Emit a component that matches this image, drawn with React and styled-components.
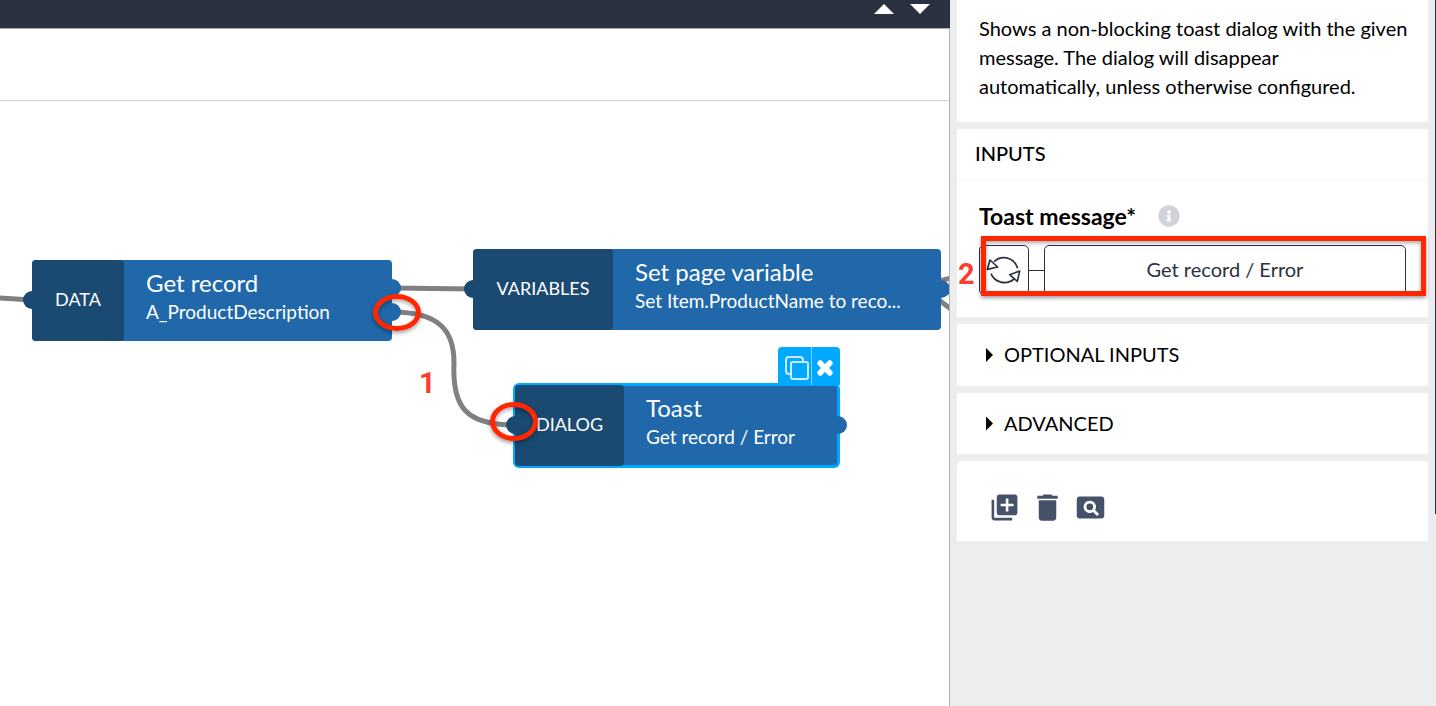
import React from "react";
import styled, { createGlobalStyle, css } from "styled-components";
import { MdDelete, MdLibraryAdd, MdPageview } from "react-icons/md";
import { FaInfoCircle, FaTimes } from "react-icons/fa";

const color = {
  ink: "#2a3140",
  node: "#2068aa",
  nodeDark: "#1a4971",
  selected: "#00a9ff",
  wire: "#808080",
  panel: "#ecedef",
  tool: "#465269",
  mark: "#ff2600",
  markText: "#ff3b30",
};

const GlobalStyle = createGlobalStyle`
  *, *::before, *::after { box-sizing: border-box; }
  body {
    margin: 0;
    background: #fff;
    color: #000;
    font-family: Lato, "Open Sans", sans-serif;
    font-size: 20px;
  }
  button { font: inherit; color: inherit; padding: 0; border: 0; background: none; cursor: pointer; }
  h2, p { margin: 0; }
  svg { display: block; }
`;

const Page = styled.div`
  display: flex;
  height: 100vh;
  min-height: 560px;
  overflow: hidden;
`;

const Editor = styled.main`
  flex: 1;
  min-width: 0;
  display: flex;
  flex-direction: column;
  border-right: 1px solid #b0b1b3;
`;

const TopBar = styled.header`
  display: flex;
  justify-content: flex-end;
  gap: 16px;
  height: 29px;
  padding: 4px 20px 0 0;
  margin-right: -1px;
  background: ${color.ink};
  border-bottom: 1px solid #a9acb1;
`;

const ArrowButton = styled.button`
  width: 20px;
  height: 10px;
  background: #fff;
  clip-path: ${(p) =>
    p.$up ? "polygon(50% 0, 100% 100%, 0 100%)" : "polygon(0 0, 100% 0, 50% 100%)"};
`;

const SubBar = styled.div`
  height: 72px;
  border-bottom: 1px solid #d0d2d6;
`;

const Canvas = styled.section`
  position: relative;
  flex: 1;
  overflow: hidden;
`;

const Wires = styled.svg`
  position: absolute;
  inset: 0;
  width: 100%;
  height: 100%;
  pointer-events: none;
`;

const NodeBox = styled.article`
  position: absolute;
  left: ${(p) => p.$x}px;
  top: ${(p) => p.$y}px;
  width: ${(p) => p.$w}px;
  height: 81px;
  display: flex;
  background: ${color.node};
  border-radius: 4px;
  color: #fff;
  ${(p) =>
    p.$selected &&
    css`
      box-shadow: inset 0 0 0 1px ${color.selected}, 0 0 0 2px ${color.selected};
    `}
`;

const NodeKind = styled.div`
  position: relative;
  display: flex;
  align-items: center;
  justify-content: center;
  flex: 0 0 ${(p) => p.$w}px;
  padding-bottom: 3px;
  background: ${color.nodeDark};
  border-radius: 4px;
  font-size: 18px;
`;

const NodeBody = styled.div`
  position: relative;
  flex: 1;
  min-width: 0;
  padding: 8px 22px;
`;

const NodeTitle = styled.div`
  font-size: 24px;
  line-height: 29px;
  white-space: nowrap;
`;

const NodeText = styled.div`
  font-size: 19px;
  line-height: 29px;
  white-space: nowrap;
`;

const Port = styled.span`
  position: absolute;
  top: ${(p) => p.$y}px;
  ${(p) => (p.$out ? "right: -9px;" : "left: -9px;")}
  width: 18px;
  height: 18px;
  border-radius: 50%;
  background: ${(p) => (p.$out ? color.node : color.nodeDark)};
`;

const NodeTools = styled.div`
  position: absolute;
  right: -2px;
  bottom: 100%;
  display: flex;
  height: 38px;
  background: ${color.selected};
  border-radius: 4px 4px 0 0;
`;

const NodeTool = styled.button`
  display: flex;
  align-items: center;
  justify-content: center;
  width: 33px;
  padding: 4px 0 0 4px;
  color: #fff;
  & + & {
    width: 29px;
    padding: 4px 3px 0 0;
    border-left: 1px solid #7fd4ff;
  }
`;

const RemoveIcon = styled(FaTimes)`
  stroke: #fff;
  stroke-width: 50px;
`;

const numeral = css`
  font-family: Roboto, sans-serif;
  font-weight: 700;
  font-size: 29px;
  line-height: 32px;
  color: ${color.markText};
`;

const CanvasMark = styled.span`
  position: absolute;
  left: 419px;
  top: 266px;
  ${numeral}
`;

const Ring = styled.span`
  position: absolute;
  left: ${(p) => p.$x}px;
  top: ${(p) => p.$y}px;
  width: 48px;
  height: ${(p) => p.$h}px;
  border: 5px solid ${color.mark};
  border-radius: 50%;
  box-shadow: 0 2px 4px rgba(0, 0, 0, 0.4), inset 0 2px 4px rgba(0, 0, 0, 0.35);
`;

const Side = styled.aside`
  position: relative;
  flex: 0 0 486px;
  display: flex;
  flex-direction: column;
  gap: 7px;
  padding: 0 8px 0 7px;
  background: ${color.panel};
`;

const ScrollMark = styled.span`
  position: absolute;
  top: 0;
  right: 0;
  width: 1px;
  height: 514px;
  background: ${color.ink};
`;

const Card = styled.section`
  background: #fff;
  &:last-of-type {
    border-radius: 4px 4px 0 0;
  }
`;

const Description = styled.p`
  padding: 14px 12px 21px 22px;
  line-height: 29px;
`;

const CardTitle = styled.h2`
  padding: 10px 18px 11px;
  border-bottom: 1px solid #f3f3f4;
  font-size: 20px;
  line-height: 29px;
  font-weight: 500;
`;

const CardBody = styled.div`
  padding: 21px 22px 22px;
`;

const LabelRow = styled.div`
  display: flex;
  align-items: center;
  gap: 22px;
  height: 29px;
  margin-bottom: 15px;
`;

const FieldLabel = styled.label`
  font-size: 23px;
  font-weight: 700;
`;

const InfoButton = styled.button`
  color: #d0d3d9;
`;

const Field = styled.div`
  position: relative;
  display: flex;
  align-items: center;
  height: 50px;
`;

const BindingButton = styled.button`
  display: flex;
  align-items: center;
  justify-content: center;
  width: 50px;
  height: 100%;
  border: 1px solid ${color.ink};
  border-radius: 5px;
`;

const Link = styled.span`
  width: 15px;
  height: 1px;
  background: ${color.ink};
`;

const ValueButton = styled.button`
  flex: 1;
  height: 100%;
  padding-bottom: 2px;
  border: 1px solid ${color.ink};
  border-radius: 5px;
  color: ${color.ink};
`;

const FieldFrame = styled.span`
  position: absolute;
  inset: -9px -20px -1px 2px;
  border: 5px solid ${color.mark};
  box-shadow: 0 2px 4px rgba(0, 0, 0, 0.4), inset 0 2px 4px rgba(0, 0, 0, 0.35);
  pointer-events: none;
`;

const FieldMark = styled.span`
  position: absolute;
  left: -21px;
  top: 13px;
  ${numeral}
`;

const Expander = styled.button`
  display: flex;
  align-items: center;
  gap: 11px;
  width: 100%;
  height: ${(p) => p.$h || 62}px;
  padding: 0 29px 2px;
  &::before {
    content: "";
    width: 7px;
    height: 14px;
    margin-top: 2px;
    background: #000;
    clip-path: polygon(0 0, 100% 50%, 0 100%);
  }
`;

const Actions = styled.div`
  display: flex;
  height: 80px;
  padding: 13px 26px 0;
`;

const Action = styled.button`
  display: flex;
  align-items: center;
  justify-content: center;
  width: 43px;
  color: ${color.tool};
`;

function CopyIcon() {
  return (
    <svg width="24" height="24" viewBox="0 0 24 24" fill="none" stroke="#c9edff" strokeWidth="2">
      <path d="M5 18H4a3 3 0 0 1-3-3V4a3 3 0 0 1 3-3h11a3 3 0 0 1 3 3v1" />
      <rect x="6" y="6" width="17" height="17" rx="2" />
    </svg>
  );
}

function BindingIcon() {
  return (
    <svg
      width="36"
      height="28"
      viewBox="48 80 108 84"
      fill="none"
      stroke={color.ink}
      strokeWidth="5"
      strokeLinejoin="round"
    >
      <path d="M72 97C90 79 130 78 143 117" />
      <path d="M63 133C73 159 109 169 132 149" />
      <path d="M52 120L60 92L83 113Z" />
      <path d="M149 125L119 136L142 156Z" />
    </svg>
  );
}

function FlowNode({ x, y, w, kind, kindWidth, title, text, inY, outs, selected, children }) {
  return (
    <NodeBox $x={x} $y={y} $w={w} $selected={selected}>
      {outs.map((top) => (
        <Port key={top} $out $y={top} />
      ))}
      <NodeKind $w={kindWidth}>
        <Port $y={inY} />
        {kind}
      </NodeKind>
      <NodeBody>
        <NodeTitle>{title}</NodeTitle>
        <NodeText>{text}</NodeText>
      </NodeBody>
      {children}
    </NodeBox>
  );
}

export default function App() {
  return (
    <>
      <GlobalStyle />
      <Page>
        <Editor>
          <TopBar>
            <ArrowButton $up aria-label="Move up" />
            <ArrowButton aria-label="Move down" />
          </TopBar>
          <SubBar />
          <Canvas>
            <Wires fill="none" stroke={color.wire} strokeWidth="5">
              <path d="M-2 197L32 199" />
              <path d="M392 187L473 188" />
              <path d="M392 211C440 211 454 230 454 262C452 306 466 324 514 324" />
              <path d="M935 181L955 176" />
              <path d="M935 196L955 211" />
            </Wires>
            <FlowNode
              x={32} y={159} w={360} kind="DATA" kindWidth={92}
              title="Get record" text="A_ProductDescription"
              inY={31} outs={[19, 43]}
            />
            <FlowNode
              x={473} y={148} w={468} kind="VARIABLES" kindWidth={140}
              title="Set page variable" text="Set Item.ProductName to reco..."
              inY={31} outs={[31]}
            />
            <FlowNode
              x={515} y={284} w={323} kind="DIALOG" kindWidth={109}
              title="Toast" text="Get record / Error"
              inY={31} outs={[31]} selected
            >
              <NodeTools>
                <NodeTool aria-label="Duplicate"><CopyIcon /></NodeTool>
                <NodeTool aria-label="Remove"><RemoveIcon size={20} /></NodeTool>
              </NodeTools>
            </FlowNode>
            <Ring $x={373} $y={193} $h={37} />
            <Ring $x={490} $y={301} $h={39} />
            <CanvasMark>1</CanvasMark>
          </Canvas>
        </Editor>

        <Side>
          <Card>
            <Description>
              Shows a non-blocking toast dialog with the given
              <br />
              message. The dialog will disappear
              <br />
              automatically, unless otherwise configured.
            </Description>
          </Card>
          <Card>
            <CardTitle>INPUTS</CardTitle>
            <CardBody>
              <LabelRow>
                <FieldLabel htmlFor="toast-message">Toast message*</FieldLabel>
                <InfoButton aria-label="About this input"><FaInfoCircle size={22} /></InfoButton>
              </LabelRow>
              <Field>
                <BindingButton aria-label="Change binding"><BindingIcon /></BindingButton>
                <Link />
                <ValueButton id="toast-message">Get record / Error</ValueButton>
                <FieldFrame />
                <FieldMark>2</FieldMark>
              </Field>
            </CardBody>
          </Card>
          <Card>
            <Expander aria-expanded="false">OPTIONAL INPUTS</Expander>
          </Card>
          <Card>
            <Expander aria-expanded="false" $h={61}>ADVANCED</Expander>
          </Card>
          <Card>
            <Actions>
              <Action aria-label="Add to library"><MdLibraryAdd size={31} /></Action>
              <Action aria-label="Delete"><MdDelete size={35} /></Action>
              <Action aria-label="Inspect"><MdPageview size={33} /></Action>
            </Actions>
          </Card>
          <ScrollMark />
        </Side>
      </Page>
    </>
  );
}
